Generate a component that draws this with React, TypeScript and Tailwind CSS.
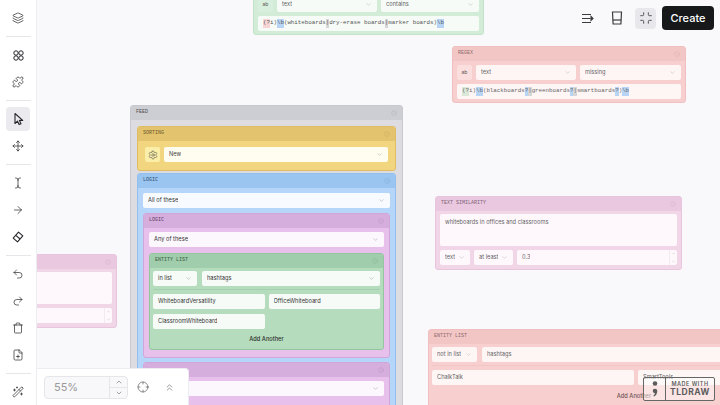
import type { ReactNode } from 'react';
import {
  ArrowRight,
  ChevronDown,
  ChevronUp,
  ChevronsUp,
  Crosshair,
  FilePlus,
  Info,
  Layers,
  Minimize,
  Move,
  Puzzle,
  Redo2,
  Settings,
  TextCursor,
  Trash,
  Undo2,
  Wand2,
} from 'lucide-react';

const SANS = "font-['Inter','Liberation_Sans',sans-serif]";

const THEMES = {
  gray: { wrap: 'bg-[#dcdce1] border-[#c8c9ce]', head: 'bg-[#cdced3] text-[#4a4b50]', field: 'bg-white text-[#333]' },
  yellow: { wrap: 'bg-[#f1d67f] border-[#e0bd62]', head: 'bg-[#e3c36d] text-[#6b5a2c]', field: 'bg-[#fffdf0] text-[#444]' },
  blue: { wrap: 'bg-[#b5d6f8] border-[#92bfee]', head: 'bg-[#9ac5f1] text-[#2f4d6e]', field: 'bg-[#f7fbff] text-[#333]' },
  purple: { wrap: 'bg-[#e7c0ec] border-[#d0a6d9]', head: 'bg-[#d6aedd] text-[#5a3d63]', field: 'bg-[#fcf6fd] text-[#333]' },
  green: { wrap: 'bg-[#b6dcbe] border-[#93c6a0]', head: 'bg-[#a0cdab] text-[#3c5a44]', field: 'bg-[#f6fbf7] text-[#333]' },
  red: { wrap: 'bg-[#f7cfcf] border-[#f0c0c0]', head: 'bg-[#f3c6c6] text-[#8c6a6a]', field: 'bg-[#fef5f5] text-[#666]' },
  pink: { wrap: 'bg-[#f1d6e8] border-[#e8c4dd]', head: 'bg-[#eac9e0] text-[#7d6275]', field: 'bg-[#fef7fc] text-[#666]' },
};

type ThemeName = keyof typeof THEMES;

function Node({
  theme,
  title,
  className,
  bodyClass,
  children,
}: {
  theme: ThemeName;
  title?: string;
  className: string;
  bodyClass: string;
  children: ReactNode;
}) {
  const t = THEMES[theme];
  return (
    <div className={`flex flex-col overflow-hidden rounded-[3px] border ${t.wrap} ${className}`}>
      <div className={`flex h-[14px] shrink-0 items-center justify-between px-[5px] font-['Liberation_Mono',monospace] text-[5px] ${t.head}`}>
        <span>{title}</span>
        <Info size={6} strokeWidth={1.2} className="opacity-30" />
      </div>
      <div className={`flex flex-col ${bodyClass}`}>{children}</div>
    </div>
  );
}

function Field({ theme, className, arrow, children }: { theme: ThemeName; className: string; arrow?: boolean; children?: ReactNode }) {
  return (
    <div className={`flex h-[15px] shrink-0 items-center justify-between rounded-[2px] px-[5px] text-[5.7px] ${SANS} ${THEMES[theme].field} ${className}`}>
      <span className="truncate">{children}</span>
      {arrow && <ChevronDown size={7} strokeWidth={1.2} className="shrink-0 opacity-60" />}
    </div>
  );
}

function Stepper({ theme }: { theme: ThemeName }) {
  return (
    <div className={`flex w-[8px] flex-col items-center justify-around rounded-r-[2px] border-l border-black/5 ${THEMES[theme].field}`}>
      <ChevronUp size={5} strokeWidth={1.5} className="opacity-50" />
      <ChevronDown size={5} strokeWidth={1.5} className="opacity-50" />
    </div>
  );
}

function Sep() {
  return <div className="my-[6px] h-px w-[25px] shrink-0 bg-[#e6e6ea]" />;
}

function SideIcon({ active, children }: { active?: boolean; children: ReactNode }) {
  return (
    <div className={`flex h-[24px] w-[24px] shrink-0 items-center justify-center rounded-[4px] text-[#26262a] ${active ? 'bg-[#ebebef]' : ''}`}>
      {children}
    </div>
  );
}

function Shapes4() {
  return (
    <svg width="11" height="11" viewBox="0 0 11 11" fill="none" stroke="currentColor" strokeWidth="1">
      <circle cx="3" cy="3" r="2.2" />
      <circle cx="8" cy="3" r="2.2" />
      <circle cx="3" cy="8" r="2.2" />
      <circle cx="8" cy="8" r="2.2" />
    </svg>
  );
}

function PointerIcon() {
  return (
    <svg width="13" height="14" viewBox="0 0 13 14" fill="none" stroke="currentColor" strokeWidth="1.1" strokeLinejoin="round">
      <path d="M3 1.5v10l2.5-2.3 1.6 3.4 1.9-.9-1.6-3.3h3.3z" />
    </svg>
  );
}

function EraserIcon() {
  return (
    <svg width="12" height="12" viewBox="0 0 12 12" fill="none" stroke="currentColor" strokeWidth="1.1" strokeLinejoin="round">
      <path d="M6.5 1.2l4.3 3.6-5.3 6-4.3-3.6z" />
      <path d="M3.8 4.4l4.3 3.6" />
    </svg>
  );
}

function Sidebar() {
  const ic = { size: 12, strokeWidth: 1.4 };
  return (
    <aside className="absolute left-0 top-0 z-20 flex h-full w-[37px] flex-col items-center border-r border-[#ecedf1] bg-white pt-[6px]">
      <SideIcon><Layers {...ic} /></SideIcon>
      <Sep />
      <div className="flex flex-col gap-[3px]">
        <SideIcon><Shapes4 /></SideIcon>
        <SideIcon><Puzzle {...ic} /></SideIcon>
      </div>
      <Sep />
      <div className="flex flex-col gap-[3px]">
        <SideIcon active><PointerIcon /></SideIcon>
        <SideIcon><Move {...ic} /></SideIcon>
      </div>
      <Sep />
      <div className="flex flex-col gap-[3px]">
        <SideIcon><TextCursor {...ic} /></SideIcon>
        <SideIcon><ArrowRight {...ic} /></SideIcon>
        <SideIcon><EraserIcon /></SideIcon>
      </div>
      <Sep />
      <div className="flex flex-col gap-[3px]">
        <SideIcon><Undo2 {...ic} /></SideIcon>
        <SideIcon><Redo2 {...ic} /></SideIcon>
        <SideIcon><Trash {...ic} /></SideIcon>
        <SideIcon><FilePlus {...ic} /></SideIcon>
      </div>
      <Sep />
      <SideIcon><Wand2 {...ic} /></SideIcon>
    </aside>
  );
}

function FeedNode() {
  return (
    <Node theme="gray" title="FEED" className="absolute left-[130px] top-[105px] h-[320px] w-[273px]" bodyClass="gap-[2px] px-[6px] pt-[6px]">
      <Node theme="yellow" title="SORTING" className="h-[45px]" bodyClass="flex-row items-center gap-[4px] px-[7px] pt-[6px]">
        <div className="flex h-[15px] w-[15px] items-center justify-center rounded-[2px] bg-[#fbeea9] text-[#444]">
          <Settings size={10} strokeWidth={1.3} />
        </div>
        <Field theme="yellow" className="flex-1" arrow>New</Field>
      </Node>
      <Node theme="blue" title="LOGIC" className="h-[300px]" bodyClass="px-[5px] pt-[5px]">
        <Field theme="blue" className="w-full" arrow>All of these</Field>
        <Node theme="purple" title="LOGIC" className="mt-[5px] h-[145px]" bodyClass="px-[5px] pt-[4px]">
          <Field theme="purple" className="w-full" arrow>Any of these</Field>
          <Node theme="green" title="ENTITY LIST" className="mt-[6px] h-[97px]" bodyClass="px-[3px] pt-[3px]">
            <div className="flex gap-[5px]">
              <Field theme="green" className="w-[44px]" arrow>in list</Field>
              <Field theme="green" className="flex-1" arrow>hashtags</Field>
            </div>
            <div className="my-[3px] h-px bg-[#a5d0b0]" />
            <div className="mt-[1px] grid grid-cols-2 gap-x-[4px] gap-y-[5px]">
              <Field theme="green" className="w-full">WhiteboardVersatility</Field>
              <Field theme="green" className="w-full">OfficeWhiteboard</Field>
              <Field theme="green" className="w-full">ClassroomWhiteboard</Field>
            </div>
            <div className={`mt-[6px] text-center text-[5.7px] font-medium text-[#2a2f2b] ${SANS}`}>Add Another</div>
          </Node>
        </Node>
        <Node theme="purple" title="" className="mt-[4px] h-[80px]" bodyClass="px-[5px] pt-[4px]">
          <Field theme="purple" className="w-full" arrow> </Field>
        </Node>
      </Node>
    </Node>
  );
}

function Tok({ c, children }: { c?: 'b' | 'r' | 'g' | 'y'; children: ReactNode }) {
  const bg = c === 'b' ? 'bg-[#b7d4f5]' : c === 'r' ? 'bg-[#f7d5d5]' : c === 'g' ? 'bg-[#d6d6d6]' : c === 'y' ? 'bg-[#dbe8d8]' : '';
  return <span className={bg}>{children}</span>;
}

function RegexLine({ theme, children }: { theme: ThemeName; children: ReactNode }) {
  return (
    <div className={`flex h-[15px] shrink-0 items-center whitespace-pre rounded-[2px] px-[5px] font-['Liberation_Mono',monospace] text-[5.8px] text-[#555] ${THEMES[theme].field}`}>
      {children}
    </div>
  );
}

function Chip({ className, children }: { className: string; children: ReactNode }) {
  return (
    <div className={`flex h-[15px] w-[15px] shrink-0 items-center justify-center rounded-[2px] text-[5px] text-[#555] ${SANS} ${className}`}>
      {children}
    </div>
  );
}

function TopRegex() {
  return (
    <div className="absolute left-[253px] top-[-6px] flex h-[41px] w-[231px] flex-col gap-[4px] rounded-[3px] border border-[#c2e3c9] bg-[#d2ecd8] px-[4px] pt-[2px]">
      <div className="flex gap-[4px]">
        <Chip className="bg-[#d9efde]">ab</Chip>
        <Field theme="green" className="w-[100px] text-[#666]" arrow>text</Field>
        <Field theme="green" className="flex-1 text-[#666]" arrow>contains</Field>
      </div>
      <RegexLine theme="green">
        <Tok c="r">(?</Tok>i)<Tok c="b">\b</Tok>(whiteboards<Tok c="g">|</Tok>dry-erase boards<Tok c="g">|</Tok>marker boards)<Tok c="b">\b</Tok>
      </RegexLine>
    </div>
  );
}

function RegexNode() {
  return (
    <Node theme="red" title="REGEX" className="absolute left-[452px] top-[46px] h-[57px] w-[234px]" bodyClass="gap-[4px] px-[4px] pt-[4px]">
      <div className="flex gap-[4px]">
        <Chip className="bg-[#fbdede]">ab</Chip>
        <Field theme="red" className="w-[100px]" arrow>text</Field>
        <Field theme="red" className="flex-1" arrow>missing</Field>
      </div>
      <RegexLine theme="red">
        <Tok c="y">(?</Tok>i)<Tok c="b">\b</Tok>(blackboards<Tok c="b">?</Tok><Tok c="g">|</Tok>greenboards<Tok c="b">?</Tok><Tok c="g">|</Tok>smartboards<Tok c="b">?</Tok>)<Tok c="b">\b</Tok>
      </RegexLine>
    </Node>
  );
}

function SimilarityNode() {
  return (
    <Node theme="pink" title="TEXT SIMILARITY" className="absolute left-[435px] top-[196px] h-[74px] w-[247px]" bodyClass="gap-[4px] px-[4px] pt-[3px]">
      <div className={`h-[32px] rounded-[2px] px-[5px] pt-[4px] text-[5.7px] ${SANS} ${THEMES.pink.field}`}>
        whiteboards in offices and classrooms
      </div>
      <div className="flex gap-[4px]">
        <Field theme="pink" className="w-[30px]" arrow>text</Field>
        <Field theme="pink" className="w-[39px]" arrow>at least</Field>
        <div className="flex flex-1">
          <Field theme="pink" className="flex-1 rounded-r-none">0.3</Field>
          <Stepper theme="pink" />
        </div>
      </div>
    </Node>
  );
}

function LeftPinkNode() {
  return (
    <Node theme="pink" className="absolute left-[-80px] top-[254px] h-[74px] w-[197px]" bodyClass="gap-[4px] px-[4px] pt-[3px]">
      <div className={`h-[32px] rounded-[2px] ${THEMES.pink.field}`} />
      <div className="flex">
        <Field theme="pink" className="flex-1 rounded-r-none" />
        <Stepper theme="pink" />
      </div>
    </Node>
  );
}

function EntityRedNode() {
  return (
    <Node theme="red" title="ENTITY LIST" className="absolute left-[428px] top-[329px] h-[90px] w-[340px]" bodyClass="px-[3px] pt-[3px]">
      <div className="flex gap-[5px]">
        <Field theme="red" className="w-[45px]" arrow>not in list</Field>
        <Field theme="red" className="flex-1">hashtags</Field>
      </div>
      <div className="my-[3px] h-px bg-[#f3c6c6]" />
      <div className="mt-[1px] flex gap-[4px]">
        <Field theme="red" className="w-[202px]">ChalkTalk</Field>
        <Field theme="red" className="flex-1">SmartTools</Field>
      </div>
      <div className={`mt-[7px] w-[404px] text-center text-[5.7px] font-medium text-[#6e5555] ${SANS}`}>Add Another</div>
    </Node>
  );
}

function ZoomPanel() {
  return (
    <div className="absolute bottom-0 left-[37px] z-20 flex h-[37px] w-[152px] items-center rounded-tr-[4px] border-r border-t border-[#ecedf1] bg-white pl-[7px]">
      <div className="flex h-[23px] w-[84px] overflow-hidden rounded-[4px] border border-[#e6e6ea] bg-[#f8f8fa]">
        <div className={`flex flex-1 items-center pl-[9px] text-[11px] text-[#999] ${SANS}`}>55%</div>
        <div className="flex w-[18px] flex-col border-l border-[#e6e6ea] text-[#777]">
          <div className="flex flex-1 items-center justify-center border-b border-[#e6e6ea]"><ChevronUp size={8} /></div>
          <div className="flex flex-1 items-center justify-center"><ChevronDown size={8} /></div>
        </div>
      </div>
      <Crosshair size={12} strokeWidth={1.3} className="ml-[9px] text-[#555]" />
      <ChevronsUp size={11} strokeWidth={1.3} className="ml-[15px] text-[#555]" />
    </div>
  );
}

function TopBar() {
  return (
    <div className="absolute right-[6px] top-[6px] z-20 flex items-center text-[#3c3c40]">
      <svg width="13" height="11" viewBox="0 0 13 11" fill="none" stroke="currentColor" strokeWidth="1.1">
        <path d="M1 1.5h9M1 5.5h8.5M1 9.5h9" />
        <path d="M10 3.5l2 2-2 2z" fill="currentColor" />
      </svg>
      <svg className="ml-[17px]" width="12" height="14" viewBox="0 0 12 14" fill="none" stroke="currentColor" strokeWidth="1.2">
        <path d="M1.5 1h9l-.6 12H2.100z" />
        <path d="M1.800 9h8.400" />
      </svg>
      <div className="ml-[12px] flex h-[21px] w-[21px] items-center justify-center rounded-[4px] bg-[#e8e8ec] text-[#333]">
        <Minimize size={14} strokeWidth={1.4} />
      </div>
      <div className={`ml-[6px] flex h-[24px] w-[52px] items-center justify-center rounded-[4px] bg-[#16181a] text-[11px] font-medium text-white ${SANS}`}>
        Create
      </div>
    </div>
  );
}

function Watermark() {
  return (
    <div className="absolute left-[643px] top-[377px] z-20 flex h-[24px] w-[72px] overflow-hidden rounded-[2px] border-[1.5px] border-[#666] bg-white/45 text-[#5c5c5c]">
      <div className="flex w-[22px] items-center justify-center border-r-[1.5px] border-[#666]">
        <svg width="8" height="18" viewBox="0 0 8 18" fill="currentColor">
          <circle cx="4" cy="3.500" r="2.300" />
          <path d="M1.700 11a2.300 2.300 0 1 1 4.600 0c0 2.600-1.400 4.600-3.400 5.600l-.6-.9c1-.7 1.500-1.500 1.600-2.500A2.300 2.300 0 0 1 1.700 11z" />
        </svg>
      </div>
      <div className={`flex flex-1 flex-col items-center justify-center leading-none ${SANS}`}>
        <span className="text-[5.5px] font-semibold tracking-[0.5px]">MADE WITH</span>
        <span className="mt-[1px] text-[8.5px] font-bold tracking-[0.5px]">TLDRAW</span>
      </div>
    </div>
  );
}

export default function App() {
  return (
    <main className="relative h-[405px] w-[720px] overflow-hidden bg-[#f9f9fb]">
      <TopRegex />
      <RegexNode />
      <SimilarityNode />
      <LeftPinkNode />
      <EntityRedNode />
      <FeedNode />
      <Sidebar />
      <ZoomPanel />
      <TopBar />
      <Watermark />
    </main>
  );
}
